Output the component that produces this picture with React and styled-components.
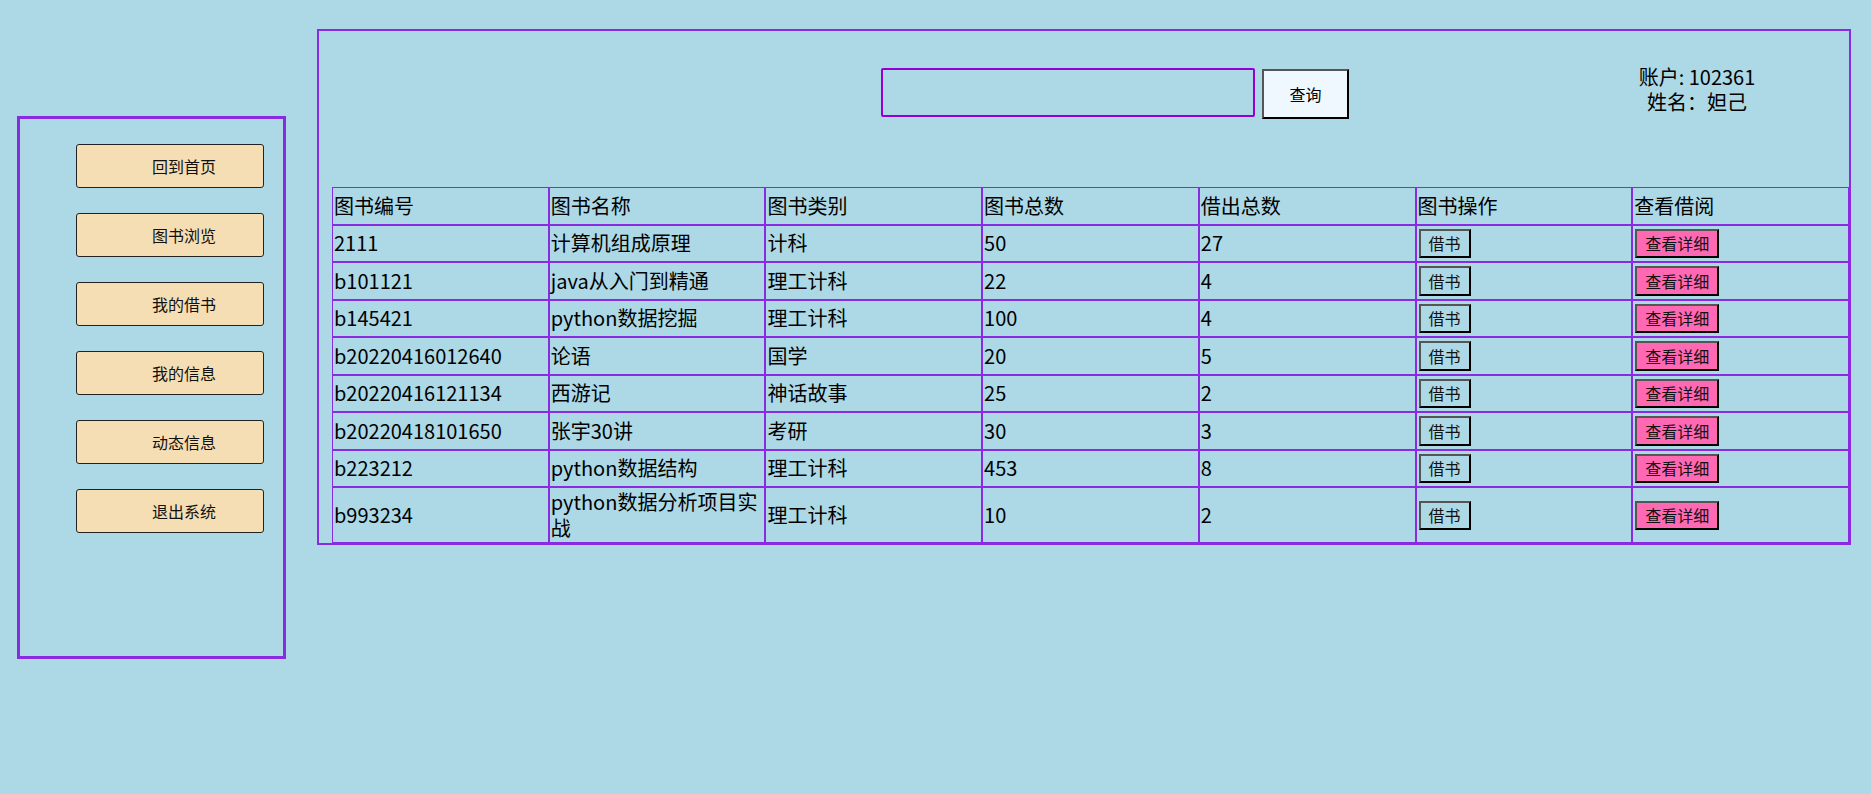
import React from 'react';
import styled, { createGlobalStyle } from 'styled-components';

const GlobalStyle = createGlobalStyle`
  * {
    box-sizing: border-box;
  }
  body {
    margin: 0;
    background-color: #add8e6;
    font-family: "Microsoft YaHei", "Noto Sans CJK SC", "Noto Sans", sans-serif;
    color: #000;
  }
`;

const Page = styled.div`
  display: flex;
  align-items: flex-start;
  padding: 29px 20px 0 17px;
  min-height: 794px;
`;

const Sidebar = styled.nav`
  width: 269px;
  height: 543px;
  margin-top: 87px;
  border: 3px solid #8a2be2;
  padding: 25px 0 0 56px;
  display: flex;
  flex-direction: column;
  gap: 25px;
  flex-shrink: 0;
`;

const MenuButton = styled.button`
  width: 188px;
  height: 44px;
  padding: 0 0 0 28px;
  background-color: #f5deb3;
  border: 1px solid #222;
  border-radius: 3px;
  font-family: inherit;
  font-size: 16px;
  color: #111;
  text-align: center;
  cursor: pointer;
`;

const Panel = styled.main`
  flex: 1;
  margin-left: 31px;
  border: 2px solid #8a2be2;
  padding-left: 13px;
`;

const Header = styled.div`
  display: flex;
  align-items: flex-start;
  height: 156px;
`;

const SearchForm = styled.form`
  display: flex;
  align-items: flex-start;
  gap: 7px;
  margin: 37px 0 0 549px;
`;

const SearchInput = styled.input`
  width: 374px;
  height: 49px;
  border: 2px solid #9400d3;
  border-radius: 2px;
  background: transparent;
  font-family: inherit;
  font-size: 16px;
  outline: none;
`;

const SearchButton = styled.button`
  width: 87px;
  height: 50px;
  margin-top: 1px;
  background-color: #f0f8ff;
  border: 2px solid;
  border-color: #555 #000 #000 #555;
  font-family: inherit;
  font-size: 16px;
  color: #000;
  cursor: pointer;
`;

const Account = styled.div`
  width: 200px;
  margin: 33px 0 0 248px;
  font-size: 20px;
  line-height: 25px;
  text-align: center;
`;

const Table = styled.table`
  width: 100%;
  table-layout: fixed;
  border-collapse: separate;
  border-spacing: 0;
`;

const Row = styled.tr`
  height: 37.5px;
`;

const Cell = styled.td`
  border: 1px solid #8a2be2;
  padding: 1px;
  font-size: 20px;
  line-height: 26px;
  text-align: left;
  vertical-align: middle;
  font-weight: normal;
`;

const CellButton = styled.button`
  height: 29.5px;
  padding: 0 8px;
  background-color: ${({ $pink }) => ($pink ? '#ff69b4' : 'transparent')};
  border: 2px solid;
  border-color: #555 #000 #000 #555;
  font-family: inherit;
  font-size: 16px;
  line-height: 21px;
  color: #111;
  vertical-align: middle;
  margin-left: 1px;
  cursor: pointer;
`;

const menu = ['回到首页', '图书浏览', '我的借书', '我的信息', '动态信息', '退出系统'];

const columns = ['图书编号', '图书名称', '图书类别', '图书总数', '借出总数', '图书操作', '查看借阅'];

const books = [
  { id: '2111', name: '计算机组成原理', type: '计科', total: 50, lent: 27 },
  { id: 'b101121', name: 'java从入门到精通', type: '理工计科', total: 22, lent: 4 },
  { id: 'b145421', name: 'python数据挖掘', type: '理工计科', total: 100, lent: 4 },
  { id: 'b20220416012640', name: '论语', type: '国学', total: 20, lent: 5 },
  { id: 'b20220416121134', name: '西游记', type: '神话故事', total: 25, lent: 2 },
  { id: 'b20220418101650', name: '张宇30讲', type: '考研', total: 30, lent: 3 },
  { id: 'b223212', name: 'python数据结构', type: '理工计科', total: 453, lent: 8 },
  { id: 'b993234', name: 'python数据分析项目实战', type: '理工计科', total: 10, lent: 2 },
];

const App = () => {
  return (
    <>
      <GlobalStyle />
      <Page>
        <Sidebar>
          {menu.map((label) => (
            <MenuButton key={label}>{label}</MenuButton>
          ))}
        </Sidebar>
        <Panel>
          <Header>
            <SearchForm onSubmit={(e) => e.preventDefault()}>
              <SearchInput type="text" />
              <SearchButton type="submit">查询</SearchButton>
            </SearchForm>
            <Account>
              账户: 102361<br />
              姓名：妲己
            </Account>
          </Header>
          <Table>
            <thead>
              <Row>
                {columns.map((col) => (
                  <Cell as="th" key={col}>{col}</Cell>
                ))}
              </Row>
            </thead>
            <tbody>
              {books.map((book) => (
                <Row key={book.id}>
                  <Cell>{book.id}</Cell>
                  <Cell>{book.name}</Cell>
                  <Cell>{book.type}</Cell>
                  <Cell>{book.total}</Cell>
                  <Cell>{book.lent}</Cell>
                  <Cell><CellButton>借书</CellButton></Cell>
                  <Cell><CellButton $pink>查看详细</CellButton></Cell>
                </Row>
              ))}
            </tbody>
          </Table>
        </Panel>
      </Page>
    </>
  );
};

export default App;
